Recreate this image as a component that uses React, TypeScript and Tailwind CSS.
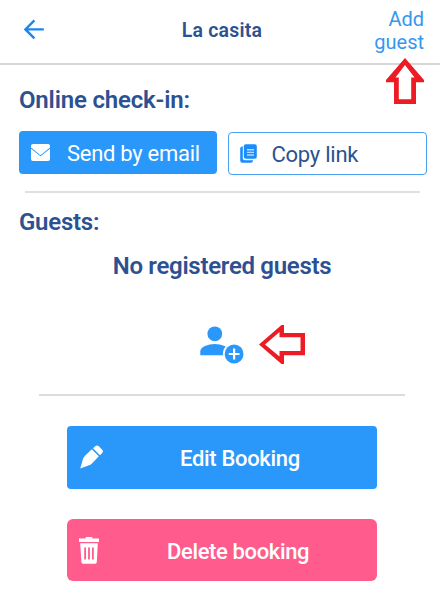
import React from "react";

const ROBOTO = "font-['Roboto','Liberation_Sans',sans-serif]";

function BackIcon() {
  return (
    <svg width="22" height="22" viewBox="0 0 22 22" fill="none" stroke="#1a86f5" strokeWidth="2.4">
      <path d="M11.4 1.4 L2.4 10.4 L11.4 19.4 M2.4 10.4 H20.8" />
    </svg>
  );
}

function MailIcon() {
  return (
    <svg width="19" height="17" viewBox="0 0 19 17" fill="#fff">
      <path d="M2 0H17Q19 0 19 2V3.4L9.5 11.2L0 3.4V2Q0 0 2 0Z" />
      <path d="M0 4.7L9.5 12.3L19 4.7V15Q19 17 17 17H2Q0 17 0 15Z" />
    </svg>
  );
}

function CopyIcon() {
  return (
    <svg width="17" height="19" viewBox="0 0 17 19">
      <path d="M2.8 2.3V14.2Q2.8 16.2 4.8 16.2H13.2Q12.8 18.8 10.8 18.8H2.4Q0.2 18.8 0.2 16.6V4.2Q0.2 2.6 2.8 2.3Z" fill="#1a8cfb" />
      <rect x="3.8" y="0.2" width="13" height="14.6" rx="2" fill="#1a8cfb" />
      <path d="M7 5.8H14M7 8.4H14M7 11H14" stroke="#b5dafd" strokeWidth="1.4" />
    </svg>
  );
}

function AddGuestIcon() {
  return (
    <svg width="44" height="38" viewBox="0 0 44 38">
      <circle cx="14.8" cy="7.8" r="7.4" fill="#2998fa" />
      <path d="M0.3 29.3V25.5C0.3 20.8 8 18 14.8 18C21 18 29.5 20.8 29.5 25.5V29.3Z" fill="#2998fa" />
      <circle cx="34.1" cy="28" r="11.2" fill="#fff" />
      <circle cx="34.1" cy="28" r="9.4" fill="#2998fa" />
      <path d="M34.1 22.6V33.4M28.7 28H39.5" stroke="#fff" strokeWidth="2.2" />
    </svg>
  );
}

function PencilIcon() {
  return (
    <svg width="24" height="24" viewBox="0 0 24 24" fill="#fff">
      <path d="M0.2 23.4L3 14Q3.5 12.2 4.8 10.9L11.8 4.2L18.8 11.2L12.2 18.2Q11.2 19.3 9.8 20Z" />
      <path d="M13 3.2L15.2 1.2Q16.8 -0.3 18.6 1.1L22.2 4.7Q23.7 6.3 22.2 7.9L20 10.2Z" />
    </svg>
  );
}

function TrashIcon() {
  return (
    <svg width="20" height="27" viewBox="0 0 20 27">
      <path d="M0 1.6H6.6V0.8Q6.6 0 7.4 0H12.6Q13.4 0 13.4 0.8V1.6H20V5H0Z" fill="#fff" />
      <path d="M1.2 6.2H18.8L17.8 25Q17.7 26.8 16.2 26.8H4Q2.5 26.8 2.4 25Z" fill="#fff" />
      <path d="M6.1 10.6V22.6M10 10.6V22.6M13.9 10.6V22.6" stroke="#ff5c8d" strokeWidth="1.8" />
    </svg>
  );
}

export default function App() {
  return (
    <main className={`relative h-[610px] w-[440px] overflow-hidden bg-white text-[#2d5190] ${ROBOTO}`}>
      <header className="grid h-[65px] grid-cols-[100px_1fr_100px] border-b-2 border-[#d6d6d6]">
        <button className="flex items-start pt-[19px] pl-[23px]" aria-label="Back">
          <BackIcon />
        </button>
        <h1 className="pt-[19px] pl-1 text-center text-[19.5px] leading-6 font-semibold tracking-[0.2px]">La casita</h1>
        <button className="flex flex-col items-end pt-[7px] pr-4 text-[20px] leading-6 text-[#3498ee]">
          <span>Add</span>
          <span className="-mt-px">guest</span>
        </button>
      </header>

      <section className="pt-[21px]">
        <h2 className="pl-[19px] text-[24px] leading-7 font-semibold tracking-[-0.18px]">Online check-in:</h2>
        <div className="mt-[17px] flex pl-[19px]">
          <button className="flex h-[43px] w-[198px] items-center rounded-[4px] bg-[#2998fa] pl-[12px] text-[22px] tracking-[-0.28px] text-white">
            <MailIcon />
            <span className="pt-[2px] pl-[17px]">Send by email</span>
          </button>
          <button className="mt-px ml-[11px] flex h-[43px] w-[199px] items-center rounded-[4px] border-[1.5px] border-[#4a9fee] pl-[11px] text-[22px] tracking-[-0.25px]">
            <CopyIcon />
            <span className="pt-[2px] pl-[14.5px]">Copy link</span>
          </button>
        </div>
        <hr className="mt-4 mr-5 ml-[25px] border-t-2 border-[#e0e0e0]" />
      </section>

      <section className="pt-[15px]">
        <h2 className="pl-[19px] text-[24px] leading-7 font-semibold tracking-[-0.25px]">Guests:</h2>
        <p className="mt-4 pl-1 text-center text-[24px] leading-7 font-semibold tracking-[-0.3px]">No registered guests</p>
        <div className="mt-[46px] pl-[200px]">
          <AddGuestIcon />
        </div>
        <hr className="mt-[30px] mr-[35px] ml-[39px] border-t-2 border-[#dcdcdc]" />
      </section>

      <section className="flex flex-col gap-[30.5px] pt-[30px] pl-[67px]">
        <button className="flex h-[62.5px] w-[310px] items-center rounded-[4px] bg-[#2998fa] text-[22px] font-medium tracking-[-0.32px] text-white">
          <span className="w-[113px] pl-[13px]">
            <PencilIcon />
          </span>
          <span className="pt-[3px]">Edit Booking</span>
        </button>
        <button className="flex h-[62px] w-[310px] items-center rounded-[6px] bg-[#ff5c8d] text-[22px] font-medium tracking-[-0.36px] text-white">
          <span className="w-[100px] pl-3">
            <TrashIcon />
          </span>
          <span className="pt-[3px]">Delete booking</span>
        </button>
      </section>

      {/* Red pointers over the two ways to add a guest */}
      <svg className="absolute top-[57px] left-[385px]" width="40" height="48" viewBox="0 0 40 48">
        <path d="M20 1L39 23V25.3H31V47H9V25.3H1V23Z" fill="#ed1c24" />
        <path d="M20 8L29.5 20.5H26.2V42.3H13.8V20.5H10.5Z" fill="#fff" />
      </svg>
      <svg className="absolute top-[324px] left-[258px]" width="48" height="42" viewBox="0 0 48 42">
        <path d="M1 20.5L23.5 1H26V9H47V31.3H26V40H23.5Z" fill="#ed1c24" />
        <path d="M7 20.5L21.5 8V13.3H42.5V27H21.5V32.5Z" fill="#fff" />
      </svg>
    </main>
  );
}
